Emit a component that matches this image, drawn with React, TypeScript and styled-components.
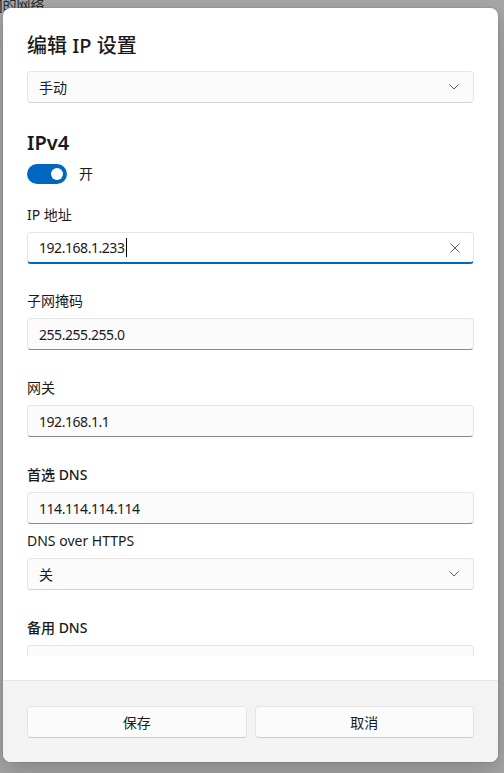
import React from "react";
import styled, { createGlobalStyle } from "styled-components";

const GlobalStyle = createGlobalStyle`
  html, body {
    margin: 0;
    padding: 0;
  }
  body {
    font-family: "Segoe UI", "Noto Sans", "Noto Sans CJK SC", sans-serif;
    color: #1a1a1a;
  }
`

export default function App() {
    return (
        <>
            <GlobalStyle/>
            <Screen>
                <BackdropText>]的网络</BackdropText>
                <Dialog>
                    <DialogBody>
                        <Title>编辑 IP 设置</Title>
                        <ScrollArea>
                            <Content>
                                <ComboBox>
                                    <span>手动</span>
                                    <Chevron/>
                                </ComboBox>
                                <SectionHeading>IPv4</SectionHeading>
                                <ToggleRow>
                                    <Toggle $on><Knob $on/></Toggle>
                                    <span>开</span>
                                </ToggleRow>
                                <Field $gap={21}>
                                    <Label>IP 地址</Label>
                                    <TextBox $focused>
                                        <Value>192.168.1.233</Value>
                                        <Caret/>
                                        <ClearButton>
                                            <svg width="10" height="10" viewBox="0 0 10 10">
                                                <path d="M0.5 0.5 L9.5 9.5 M9.5 0.5 L0.5 9.5" stroke="#5c5c5c" strokeWidth="1" fill="none"/>
                                            </svg>
                                        </ClearButton>
                                    </TextBox>
                                </Field>
                                <Field $gap={27}>
                                    <Label>子网掩码</Label>
                                    <TextBox><Value>255.255.255.0</Value></TextBox>
                                </Field>
                                <Field>
                                    <Label>网关</Label>
                                    <TextBox><Value>192.168.1.1</Value></TextBox>
                                </Field>
                                <Field>
                                    <Label $strong>首选 DNS</Label>
                                    <TextBox><Value>114.114.114.114</Value></TextBox>
                                </Field>
                                <Field $gap={7}>
                                    <Label>DNS over HTTPS</Label>
                                    <ComboBox>
                                        <span>关</span>
                                        <Chevron/>
                                    </ComboBox>
                                </Field>
                                <Field>
                                    <Label $strong>备用 DNS</Label>
                                    <TextBox><Value></Value></TextBox>
                                </Field>
                            </Content>
                            <ScrollThumb/>
                        </ScrollArea>
                    </DialogBody>
                    <Footer>
                        <FooterButton>保存</FooterButton>
                        <FooterButton>取消</FooterButton>
                    </Footer>
                </Dialog>
            </Screen>
        </>
    )
}

const Chevron = () => (
    <ChevronIcon width="10" height="6" viewBox="0 0 10 6">
        <path d="M0.5 0.5 L5 5 L9.5 0.5" stroke="#5c5c5c" strokeWidth="1" fill="none"/>
    </ChevronIcon>
)

const Screen = styled.div`
  position: relative;
  width: 504px;
  height: 773px;
  overflow: hidden;
  background: #a7a7a7;
`
const BackdropText = styled.div`
  margin-top: -5px;
  margin-left: -2px;
  font-size: 14px;
  line-height: 20px;
  color: #2b2b2b;
`
const Dialog = styled.div`
  position: absolute;
  left: 3px;
  top: 8px;
  width: 495px;
  height: 754px;
  display: flex;
  flex-direction: column;
  background: #ffffff;
  border-radius: 8px;
  overflow: hidden;
  box-shadow: 0 8px 24px rgba(0, 0, 0, 0.22), 0 0 0 1px rgba(0, 0, 0, 0.06);
`
const DialogBody = styled.div`
  flex: 1;
  display: flex;
  flex-direction: column;
  padding: 24px;
  min-height: 0;
`
const Title = styled.div`
  font-size: 20px;
  line-height: 28px;
  font-weight: 500;
  margin-bottom: 11px;
`
const ScrollArea = styled.div`
  position: relative;
  flex: 1;
  overflow: hidden;
`
const ScrollThumb = styled.div`
  position: absolute;
  top: 15px;
  right: -22px;
  width: 2px;
  height: 414px;
  border-radius: 1px;
  background: #8a8a8a;
`
const Content = styled.div`
  display: flex;
  flex-direction: column;
`
const ChevronIcon = styled.svg`
  margin-right: 14px;
  flex-shrink: 0;
`
const ComboBox = styled.div`
  height: 32px;
  box-sizing: border-box;
  display: flex;
  align-items: center;
  justify-content: space-between;
  padding-left: 11px;
  background: #fbfbfb;
  border: 1px solid #e5e5e5;
  border-bottom-color: #d1d1d1;
  border-radius: 4px;
  font-size: 14px;
`
const SectionHeading = styled.div`
  margin-top: 26px;
  font-size: 20px;
  line-height: 28px;
  font-weight: 600;
`
const ToggleRow = styled.div`
  display: flex;
  align-items: center;
  gap: 12px;
  margin-top: 7px;
  font-size: 14px;
  line-height: 20px;
`
const Toggle = styled.div<{ $on?: boolean }>`
  width: 40px;
  height: 20px;
  box-sizing: border-box;
  border-radius: 10px;
  display: flex;
  align-items: center;
  justify-content: ${p => p.$on ? 'flex-end' : 'flex-start'};
  padding: 0 4px;
  background: ${p => p.$on ? '#0067c0' : 'transparent'};
  border: ${p => p.$on ? 'none' : '1px solid #8a8a8a'};
`
const Knob = styled.div<{ $on?: boolean }>`
  width: 12px;
  height: 12px;
  border-radius: 50%;
  background: ${p => p.$on ? '#ffffff' : '#5c5c5c'};
`
const Field = styled.div<{ $gap?: number }>`
  display: flex;
  flex-direction: column;
  margin-top: ${p => p.$gap ?? 28}px;
`
const Label = styled.div<{ $strong?: boolean }>`
  font-size: 14px;
  line-height: 20px;
  font-weight: ${p => p.$strong ? 500 : 400};
  margin-bottom: 7px;
`
const TextBox = styled.div<{ $focused?: boolean }>`
  height: 32px;
  box-sizing: border-box;
  display: flex;
  align-items: center;
  padding-left: 11px;
  border: 1px solid #e5e5e5;
  border-radius: 4px;
  font-size: 14px;
  background: ${p => p.$focused ? '#ffffff' : '#fbfbfb'};
  border-bottom: ${p => p.$focused ? '2px solid #0067c0' : '1px solid #8a8a8a'};
`
const Value = styled.span`
  letter-spacing: -0.45px;
`
const Caret = styled.span`
  width: 1px;
  height: 19px;
  background: #000000;
  margin-left: 1px;
`
const ClearButton = styled.div`
  margin-left: auto;
  margin-right: 13px;
  display: flex;
  align-items: center;
`
const Footer = styled.div`
  display: grid;
  grid-template-columns: 1fr 1fr;
  gap: 8px;
  padding: 25px 24px 24px 24px;
  background: #f3f3f3;
  border-top: 1px solid #e5e5e5;
`
const FooterButton = styled.div`
  height: 32px;
  box-sizing: border-box;
  display: flex;
  align-items: center;
  justify-content: center;
  background: #fbfbfb;
  border: 1px solid #e5e5e5;
  border-bottom-color: #cccccc;
  border-radius: 4px;
  font-size: 14px;
`
